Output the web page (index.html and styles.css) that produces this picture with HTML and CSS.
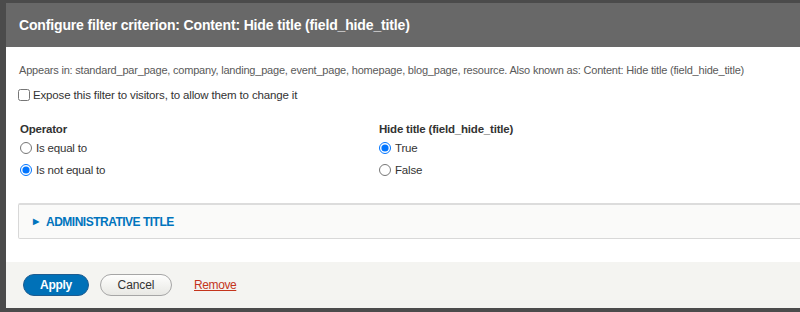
FILE: index.html
```html
<!DOCTYPE html>
<html>
<head>
<meta charset="utf-8">
<link rel="stylesheet" href="styles.css">
</head>
<body>
<div class="dialog">
  <div class="titlebar">Configure filter criterion: Content: Hide title (field_hide_title)</div>
  <div class="content">
    <div class="desc">Appears in: standard_par_page, company, landing_page, event_page, homepage, blog_page, resource. Also known as: Content: Hide title (field_hide_title)</div>
    <label class="expose"><input type="checkbox" class="cb"> Expose this filter to visitors, to allow them to change it</label>
    <div class="cols">
      <div class="col">
        <div class="lbl">Operator</div>
        <label class="opt"><input type="radio" name="op"> Is equal to</label>
        <label class="opt"><input type="radio" name="op" checked> Is not equal to</label>
      </div>
      <div class="col">
        <div class="lbl">Hide title (field_hide_title)</div>
        <label class="opt"><input type="radio" name="v" checked> True</label>
        <label class="opt"><input type="radio" name="v"> False</label>
      </div>
    </div>
    <div class="details"><span class="tri">&#9654;</span>ADMINISTRATIVE TITLE</div>
  </div>
  <div class="pane">
    <button class="btn apply">Apply</button>
    <button class="btn cancel">Cancel</button>
    <a class="remove" href="#">Remove</a>
  </div>
</div>
</body>
</html>
```
FILE: styles.css
```css
html, body {
  margin: 0;
  padding: 0;
  height: 312px;
  overflow: hidden;
  background: #4b4b4b;
  font-family: "Liberation Sans", Arial, sans-serif;
}
.dialog {
  margin: 3px 0 0 6px;
  width: 820px;
  height: 305px;
  background: #fff;
  display: flex;
  flex-direction: column;
}
.titlebar {
  height: 44px;
  box-sizing: border-box;
  background: #686868;
  color: #fff;
  font-weight: bold;
  font-size: 14px;
  letter-spacing: -0.15px;
  line-height: 44px;
  padding-left: 13px;
}
.content {
  flex: 1;
  padding: 16px 0 0 12px;
  color: #333;
}
.desc {
  font-size: 11px;
  letter-spacing: -0.2px;
  line-height: 14px;
  color: #595959;
  margin-left: 1px;
}
.expose {
  display: flex;
  align-items: center;
  font-size: 11.5px;
  letter-spacing: -0.15px;
  line-height: 16px;
  margin-top: 10px;
  color: #333;
}
.cb {
  margin: 0 3px 0 0;
  width: 12px;
  height: 12px;
}
.cols {
  display: grid;
  grid-template-columns: 359px 1fr;
  margin-top: 18px;
  padding-left: 2px;
}
.lbl {
  font-size: 11.5px;
  letter-spacing: -0.2px;
  font-weight: bold;
  line-height: 16px;
  color: #333;
}
.opt {
  display: flex;
  align-items: center;
  font-size: 11.5px;
  letter-spacing: -0.2px;
  line-height: 22px;
  color: #333;
}
.opt input {
  margin: 0 4px 0 0;
  width: 12px;
  height: 12px;
}
.details {
  margin-top: 22px;
  height: 36px;
  box-sizing: border-box;
  border: 1px solid #d8d8d8;
  border-top: 2px solid #dcdcdc;
  background: #fafaf9;
  color: #0074bd;
  font-size: 12px;
  letter-spacing: -0.5px;
  font-weight: bold;
  display: flex;
  align-items: center;
  padding-left: 14px;
  border-radius: 2px;
}
.tri {
  font-size: 8px;
  letter-spacing: 0;
  margin-right: 7px;
}
.pane {
  height: 46px;
  box-sizing: border-box;
  background: #f4f4f1;
  display: flex;
  align-items: center;
  padding-left: 17px;
}
.btn {
  font-family: "Liberation Sans", Arial, sans-serif;
  font-size: 12px;
  height: 22px;
  border-radius: 11px;
  padding: 0;
  cursor: pointer;
}
.apply {
  width: 66px;
  background: #0071b8;
  border: 1px solid #1e5c90;
  color: #fff;
  font-weight: bold;
  letter-spacing: -0.3px;
}
.cancel {
  width: 72px;
  margin-left: 11px;
  background: linear-gradient(#fefefd, #e8e8e4);
  border: 1px solid #a6a6a6;
  color: #333;
  letter-spacing: -0.1px;
}
.remove {
  margin-left: 22px;
  font-size: 12px;
  letter-spacing: -0.4px;
  color: #c4351c;
  text-decoration: underline;
}
```
